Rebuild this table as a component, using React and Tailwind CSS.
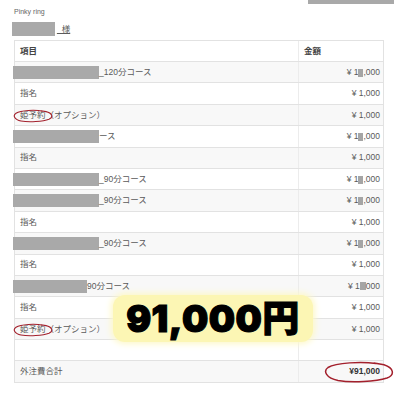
import React from "react";

const JP = { fontFamily: '"Liberation Sans", "Noto Sans CJK JP", sans-serif' };

function Mask({ w }) {
  return <span className="inline-block h-[13px] bg-[#a9a9a9] -ml-[7px] align-middle" style={{ width: w }} />;
}

function Amt({ kind }) {
  if (kind === "m")
    return (
      <span>
        ¥ 1<span className="inline-block w-[5px] h-[8px] bg-[#a5a5a5] align-middle" />,000
      </span>
    );
  if (kind === "m2")
    return (
      <span>
        ¥ 1<span className="inline-block w-[6px] h-[8px] bg-[#a5a5a5] align-middle" />000
      </span>
    );
  return <span>¥ 1,000</span>;
}

function Ellipse({ className }) {
  return (
    <svg className={className} viewBox="0 0 42 14" fill="none">
      <path d="M30 2.2 C22 0.6 8 1.2 3 4.2 C-0.5 6.5 1.5 10.8 8 12 C16 13.4 30 12.6 36 10.2 C41 8 39 4 33 2.6 L28 1.8" stroke="#a3202c" strokeWidth="1.1" strokeLinecap="round" />
    </svg>
  );
}

const rows = [
  { l: <><Mask w="86px" /><span>_120分コース</span></>, a: "m" },
  { l: "指名" },
  { l: "姫予約（オプション）", circle: true },
  { l: <><Mask w="86px" /><span>ース</span></>, a: "m" },
  { l: "指名" },
  { l: <><Mask w="86px" /><span>_90分コース</span></>, a: "m" },
  { l: <><Mask w="86px" /><span>_90分コース</span></>, a: "m" },
  { l: "指名" },
  { l: <><Mask w="86px" /><span>_90分コース</span></>, a: "m" },
  { l: "指名" },
  { l: <><Mask w="74px" /><span>90分コース</span></>, a: "m2" },
  { l: "指名" },
  { l: "姫予約（オプション）", circle: true },
  { l: "", a: "none" },
];

export default function App() {
  return (
    <div className="relative w-[400px] h-[400px] bg-white overflow-hidden text-[#5a5a5a]" style={JP}>
      <div className="flex justify-end pr-[6px]">
        <div className="w-[86px] h-[4px] bg-[#a9a9a9]" />
      </div>
      <div className="pl-[14px] mt-[4px] text-[7px] leading-[8px] text-[#666]">Pinky ring</div>
      <div className="flex items-center pl-[12px] mt-[6px] h-[14px]">
        <div className="w-[43px] h-[14px] bg-[#a9a9a9]" />
        <span className="ml-[2px] text-[8.5px] underline">_様</span>
      </div>
      <div className="ml-[14px] mt-[4px] w-[370px] border-l border-r border-t border-[#e2e2e2] text-[8.5px]">
        <div className="grid grid-cols-[284px_86px] h-[21px] border-b border-[#e2e2e2] font-bold text-[#444]">
          <div className="flex items-center pl-[5px] border-r border-[#ececec]">項目</div>
          <div className="flex items-center pl-[5px]">金額</div>
        </div>
        {rows.map((r, i) => (
          <div
            key={i}
            className={`grid grid-cols-[284px_86px] h-[21.4px] border-b border-[#e2e2e2] ${i % 2 === 0 ? "bg-[#f8f8f8]" : "bg-white"}`}
          >
            <div className="relative flex items-center pl-[5px] border-r border-[#ececec] whitespace-nowrap">
              {r.l}
              {r.circle && <Ellipse className="absolute left-[-2px] top-[4px] w-[42px] h-[14px]" />}
            </div>
            <div className="flex items-center justify-end pr-[5px]">
              {r.a !== "none" && <Amt kind={r.a} />}
            </div>
          </div>
        ))}
        <div className="grid grid-cols-[284px_86px] h-[21.4px] border-b border-[#e2e2e2] bg-[#f8f8f8]">
          <div className="flex items-center pl-[5px] border-r border-[#ececec]">外注費合計</div>
          <div className="relative flex items-center justify-end pr-[5px] font-bold text-[#333]">
            ¥91,000
            <svg className="absolute left-[25px] top-[0px] w-[71px] h-[22px]" viewBox="0 0 71 22" fill="none">
              <path d="M52 2.5 C38 0.5 12 1.5 4 6.5 C-1 10 2 17 14 19.5 C28 22 52 20.5 63 17 C71 14 70 7 60 3.8 L50 2" stroke="#a3202c" strokeWidth="1.5" strokeLinecap="round" />
            </svg>
          </div>
        </div>
      </div>
      <div className="absolute left-[113px] top-[295px] w-[200px] h-[47px] rounded-[12px] bg-[#fcf6b4] shadow-[0_0_6px_2px_#fdf8c8] flex items-center justify-center">
        <span className="text-[37px] leading-none font-black text-black tracking-[0.5px] [-webkit-text-stroke:1.2px_black]" style={{ fontFamily: 'Inter, "Noto Sans CJK JP", sans-serif' }}>
          91,000円
        </span>
      </div>
    </div>
  );
}
